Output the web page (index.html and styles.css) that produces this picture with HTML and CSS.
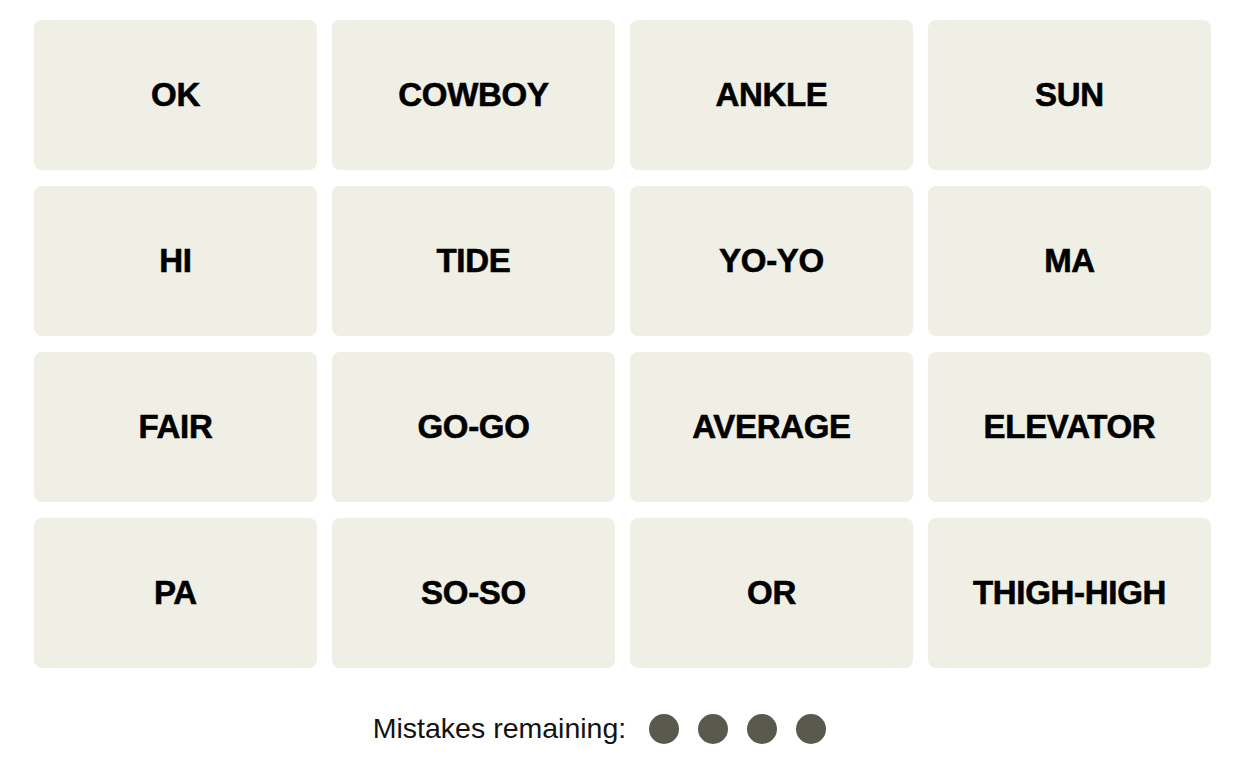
FILE: index.html
```html
<!DOCTYPE html>
<html lang="en">
<head>
  <meta charset="UTF-8">
  <title>Connections</title>
  <link rel="stylesheet" href="styles.css">
</head>
<body>
  <div class="board">
    <div class="grid">
      <div class="tile">OK</div>
      <div class="tile">COWBOY</div>
      <div class="tile">ANKLE</div>
      <div class="tile">SUN</div>
      <div class="tile">HI</div>
      <div class="tile">TIDE</div>
      <div class="tile">YO-YO</div>
      <div class="tile">MA</div>
      <div class="tile">FAIR</div>
      <div class="tile">GO-GO</div>
      <div class="tile">AVERAGE</div>
      <div class="tile">ELEVATOR</div>
      <div class="tile">PA</div>
      <div class="tile">SO-SO</div>
      <div class="tile">OR</div>
      <div class="tile">THIGH-HIGH</div>
    </div>

    <!-- Mistakes -->
    <div class="mistakes">
      <span class="label">Mistakes remaining:</span>
      <div class="dots">
        <span class="dot"></span>
        <span class="dot"></span>
        <span class="dot"></span>
        <span class="dot"></span>
      </div>
    </div>
  </div>
</body>
</html>
```

FILE: styles.css
```css
body {
  margin: 0;
  background: #fff;
  color: #000;
  font-family: "Liberation Sans", Arial, sans-serif;
}

.board {
  width: 1177px;
  padding: 20px 0 0 34px;
}

.grid {
  display: grid;
  grid-template-columns: repeat(4, 283px);
  grid-auto-rows: 150px;
  column-gap: 15px;
  row-gap: 16px;
}

.tile {
  background-color: #efefe6;
  border-radius: 8px;
  display: flex;
  justify-content: center;
  align-items: center;
  font-size: 33px;
  font-weight: bold;
  letter-spacing: -0.3px;
  -webkit-text-stroke: 0.6px #000;
}

.mistakes {
  display: flex;
  justify-content: center;
  align-items: center;
  margin-top: 46px;
  padding-right: 46px;
  height: 30px;
}

.label {
  font-size: 28.5px;
  line-height: 30px;
  margin-right: 23px;
  margin-top: -3px;
  color: #121212;
}

.dots {
  display: flex;
  gap: 19px;
}

.dot {
  width: 30px;
  height: 30px;
  border-radius: 50%;
  background-color: #5a594e;
}
```
